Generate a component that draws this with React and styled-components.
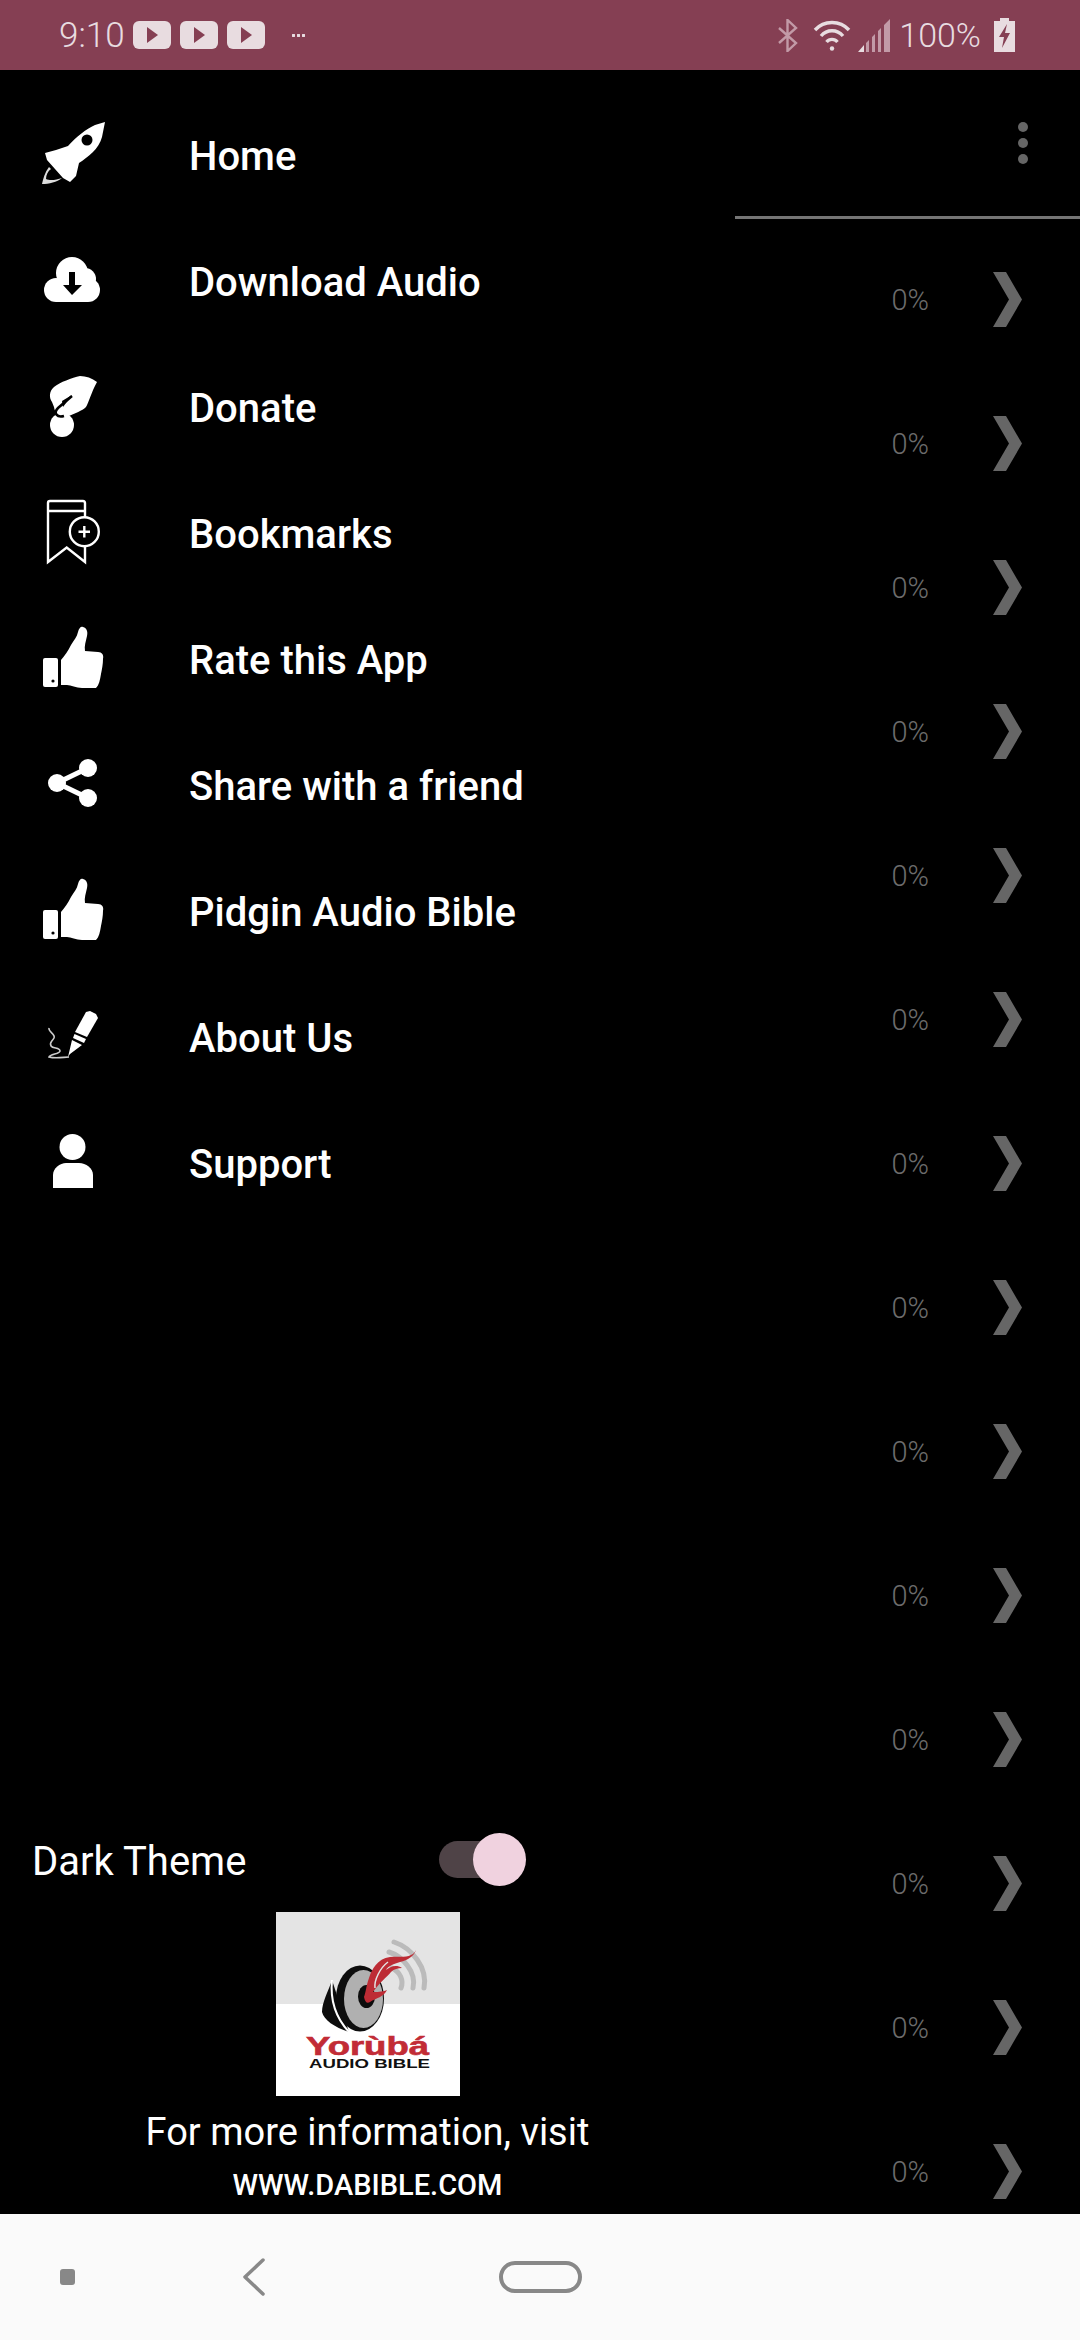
import React from 'react';
import styled, { createGlobalStyle } from 'styled-components';

const GlobalStyle = createGlobalStyle`
  html, body {
    margin: 0;
    padding: 0;
    background: #000;
  }
  * {
    box-sizing: border-box;
  }
`;

const Screen = styled.div`
  width: 1080px;
  height: 2340px;
  display: flex;
  flex-direction: column;
  background: #000;
  font-family: Roboto, "Liberation Sans", sans-serif;
  overflow: hidden;
`;

const StatusBar = styled.div`
  height: 70px;
  flex: none;
  background: #853f53;
  color: #e8dce0;
  display: flex;
  align-items: center;
  justify-content: space-between;
  padding: 0 65px 0 59px;
`;

const StatusGroup = styled.div`
  display: flex;
  align-items: center;
  gap: ${(props) => props.$gap || 0}px;
`;

const Clock = styled.span`
  font-size: 35px;
  font-weight: 300;
  width: 74px;
`;

const PlayBadge = styled.span`
  width: 38px;
  height: 28px;
  border-radius: 6px;
  background: #e8dce0;
  margin-right: 9px;
  display: flex;
  align-items: center;
  justify-content: center;

  &::after {
    content: '';
    border-left: 11px solid #853f53;
    border-top: 8px solid transparent;
    border-bottom: 8px solid transparent;
  }
`;

const MoreDots = styled.span`
  width: 14px;
  height: 3px;
  margin-left: 17px;
  background: radial-gradient(circle, #e8dce0 1.4px, transparent 1.6px) 0 0 / 5px 3px;
`;

const BatteryLevel = styled.span`
  font-size: 34px;
  font-weight: 300;
  margin: 0 13px 0 8px;
`;

const Main = styled.div`
  flex: 1;
  display: flex;
  min-height: 0;
`;

const Drawer = styled.div`
  width: 735px;
  flex: none;
  display: flex;
  flex-direction: column;
  justify-content: space-between;
`;

const Menu = styled.div`
  padding-top: 22px;
`;

const MenuRow = styled.div`
  height: 126px;
  display: flex;
  align-items: center;
  padding-left: 36px;
`;

const IconSlot = styled.div`
  width: 72px;
  height: 72px;
  margin-right: 81px;
  flex: none;
`;

const MenuLabel = styled.span`
  color: #fff;
  font-weight: 500;
  font-size: 40px;
  padding-top: 2px;
`;

const Footer = styled.div`
  display: flex;
  flex-direction: column;
  align-items: center;
  padding-bottom: 11px;
`;

const ThemeRow = styled.div`
  width: 100%;
  display: flex;
  align-items: center;
  justify-content: space-between;
  padding: 0 209px 0 32px;
  height: 54px;
`;

const ThemeLabel = styled.span`
  color: #fff;
  font-size: 40px;
`;

const SwitchTrack = styled.div`
  position: relative;
  width: 71px;
  height: 37px;
  margin-right: 16px;
  margin-top: -3px;
  border-radius: 19px;
  background: #4f4347;
`;

const SwitchThumb = styled.div`
  position: absolute;
  top: -8px;
  right: -16px;
  width: 53px;
  height: 53px;
  border-radius: 50%;
  background: #f0d2df;
`;

const LogoBox = styled.svg`
  display: block;
  width: 184px;
  height: 184px;
  margin-top: 24px;
`;

const InfoText = styled.div`
  color: #fff;
  font-size: 38px;
  line-height: 44px;
  margin-top: 14px;
`;

const SiteLink = styled.div`
  color: #fff;
  font-size: 29px;
  font-weight: 500;
  line-height: 36px;
  margin-top: 13px;
`;

const Behind = styled.div`
  flex: 1;
  min-width: 0;
  overflow: hidden;
`;

const Toolbar = styled.div`
  height: 149px;
  border-bottom: 3px solid #757575;
  display: flex;
  justify-content: flex-end;
  padding: 52px 52px 0 0;
`;

const Kebab = styled.div`
  display: flex;
  flex-direction: column;
  gap: 6px;
`;

const KebabDot = styled.span`
  width: 10px;
  height: 10px;
  border-radius: 50%;
  background: #666;
`;

const ProgressList = styled.div`
  padding-top: 8px;
`;

const ProgressRow = styled.div`
  height: 144px;
  display: flex;
  align-items: center;
  justify-content: flex-end;
  padding-right: 58px;
`;

const Percent = styled.span`
  color: #6c6c6c;
  font-size: 29px;
  font-weight: 300;
  margin-right: 64px;
  padding-top: 2px;
`;

const NavBar = styled.div`
  height: 126px;
  flex: none;
  background: #fafafa;
  display: flex;
  align-items: center;
  padding-left: 60px;
`;

const NavSquare = styled.span`
  width: 15px;
  height: 16px;
  border-radius: 3px;
  background: #888;
  margin-right: 167px;
`;

const NavPill = styled.span`
  width: 83px;
  height: 32px;
  border: 4px solid #888;
  border-radius: 16px;
  margin-left: 234px;
`;

const Rocket = () => (
  <svg width="72" height="72" viewBox="0 0 72 72">
    <path fill="#fff" d="M69 3L59 6C50 10 40 18 32 27L20 31L9 34L11 41L27 59L34 63L40 57L43 44C52 38 63 30 66 18Z" />
    <circle cx="51" cy="21" r="5.5" fill="#000" />
    <path fill="#ddd" d="M13 48C9 53 7 60 6 65C13 65 21 63 26 59C20 61 14 62 10 60C10 56 12 52 15 50Z" />
  </svg>
);

const CloudDown = () => (
  <svg width="72" height="72" viewBox="0 0 72 72">
    <g fill="#fff">
      <circle cx="20" cy="45" r="12" />
      <circle cx="36" cy="28" r="16" />
      <circle cx="49" cy="34" r="11" />
      <circle cx="52" cy="45" r="12" />
      <rect x="20" y="36" width="32" height="21" />
    </g>
    <path fill="#000" d="M33 27H39V40H46L36 50L27 40H33Z" />
  </svg>
);

const HandCoin = () => (
  <svg width="72" height="72" viewBox="0 0 72 72">
    <path fill="#fff" d="M61 11C56 7 50 5 44 5C36 7 24 11 18 16C13 20 13 27 16 31L18 36C19 44 27 48 33 45C39 42 46 40 50 36C53 31 55 22 61 11Z" />
    <circle cx="26" cy="54" r="12" fill="#fff" />
    <path fill="none" stroke="#000" strokeWidth="2.5" d="M36 25L22 37C17 42 21 47 28 45" />
    <path fill="#000" d="M26 30L36 24L27 36Z" />
  </svg>
);

const BookmarkPlus = () => (
  <svg width="72" height="72" viewBox="0 0 72 72" fill="none" stroke="#fff" strokeWidth="2.4">
    <path d="M49 20V6Q49 4 47 4H14Q12 4 12 6V65L30.7 50.5L49 65V49" />
    <path d="M12 14H49" />
    <circle cx="48.3" cy="34.7" r="14.5" />
    <path d="M42.5 34.7H54M48.3 29V40.5" />
  </svg>
);

const ThumbUp = () => (
  <svg width="72" height="72" viewBox="0 0 72 72">
    <rect x="7" y="35" width="15" height="29" rx="2" fill="#fff" />
    <circle cx="17" cy="58" r="1.6" fill="#000" />
    <path fill="#fff" d="M25 37C29 32 32 28 35 22C38 17 41 14 42 9C43 5 45 3 47 4C51 5 52 9 51 13C50 18 48 23 49 28L62 29C66 29 68 32 67 36C67 41 66 46 65 51C64 57 63 62 60 65L46 65C40 65 35 62 31 62H25Z" />
  </svg>
);

const ShareNodes = () => (
  <svg width="72" height="72" viewBox="0 0 72 72" fill="#fff">
    <path fill="none" stroke="#fff" strokeWidth="5" d="M52 19L21 34L52 49" />
    <circle cx="21" cy="34" r="9" />
    <circle cx="52" cy="19" r="9" />
    <circle cx="52" cy="49" r="9" />
  </svg>
);

const FountainPen = () => (
  <svg width="72" height="72" viewBox="0 0 72 72">
    <path fill="#fff" d="M54 10L60 13L62 17L51 36L39 31L50 11Z" />
    <path fill="#fff" d="M38.5 33L50 38L48 42L37 37Z" />
    <path fill="#fff" d="M36 39L46 44L34 53L32 56Z" />
    <path fill="none" stroke="#ccc" strokeWidth="1.6" d="M13 27C12 31 20 33 18 37C16 41 13 41 15 45C17 48 24 46 24 50C24 53 14 53 13 56C20 58 28 56 33 56" />
  </svg>
);

const Person = () => (
  <svg width="72" height="72" viewBox="0 0 72 72" fill="#fff">
    <circle cx="36.5" cy="20" r="13" />
    <path d="M17 61V48C17 41 24 36 30 36H43C50 36 57 41 57 48V61Z" />
  </svg>
);

const Chevron = () => (
  <svg width="29" height="55" viewBox="0 0 29 55">
    <path fill="#666" d="M0 0H13L29 27.5L13 55H0L16 27.5Z" />
  </svg>
);

const BluetoothIcon = () => (
  <svg width="20" height="33" viewBox="0 0 20 33" fill="none" stroke="#c29aa7" strokeWidth="2.4">
    <path d="M1 9L18 24L9.5 32V1L18 9L1 24" />
  </svg>
);

const WifiIcon = () => (
  <svg width="38" height="33" viewBox="0 0 38 33" fill="none" stroke="#e8dce0" strokeWidth="3.4">
    <path d="M2 11C11 1 27 1 36 11" />
    <path d="M8 17C14 10 24 10 30 17" />
    <path d="M13.5 23C16.5 19.5 21.5 19.5 24.5 23" />
    <circle cx="19" cy="29.5" r="2.2" fill="#e8dce0" stroke="none" />
  </svg>
);

const SignalIcon = () => (
  <svg width="33" height="33" viewBox="0 0 33 33">
    <path fill="#e8dce0" d="M0 33L6 26V33Z" />
    <path fill="#c29aa7" d="M8 24L11 21V33H8ZM14 18L17 15V33H14ZM20 12L23 9V33H20ZM26 6L32 0V33H26Z" />
  </svg>
);

const BatteryIcon = () => (
  <svg width="21" height="34" viewBox="0 0 21 34">
    <path fill="#e8dce0" d="M6 0H15V3H21V34H0V3H6Z" />
    <path fill="#853f53" d="M13 6L5 19H10L8 30L16 15H11Z" />
  </svg>
);

const Logo = () => (
  <LogoBox viewBox="0 0 184 184">
    <rect width="184" height="184" fill="#fff" />
    <rect width="184" height="92" fill="#e4e4e4" />
    <g fill="none" stroke="#bbb" strokeWidth="5" strokeLinecap="round">
      <path d="M118 30C136 36 152 56 148 76" />
      <path d="M113 40C126 44 141 60 137 76" />
      <path d="M116 56C124 60 128 68 125 76" />
    </g>
    <path fill="#0d0d0d" d="M56 68C52 80 46 90 46 100C48 108 58 115 73 120Z" />
    <path fill="none" stroke="#fff" strokeWidth="2" d="M56 68C54 88 60 106 73 120" />
    <ellipse cx="84" cy="86.5" rx="24" ry="33" fill="#0d0d0d" />
    <ellipse cx="87.5" cy="87" rx="19.5" ry="29" fill="#b0b0b0" />
    <ellipse cx="90.5" cy="84.5" rx="8.5" ry="11.5" fill="#0d0d0d" />
    <path fill="#bd2c35" d="M140 38C136 47 124 44 114 45C101 47 96 57 93 66C90 74 90 80 88 85C89 90 91 92 94 90C100 86 108 85 111 78C106 80 100 80 97 80C104 70 110 66 115 60C118 57 122 56 126 56C120 52 114 55 110 58C112 54 118 52 124 50C132 48 138 44 140 38Z" />
    <path fill="none" stroke="#e4e4e4" strokeWidth="1.5" d="M99 76C98 68 104 56 112 50" />
    <text x="30" y="143" fontFamily="Liberation Sans" fontWeight="700" fontSize="25" fill="#c22c36" stroke="#c22c36" strokeWidth="0.6" textLength="123" lengthAdjust="spacingAndGlyphs">Yorùbá</text>
    <text x="33" y="156" fontFamily="Liberation Sans" fontWeight="700" fontSize="12" fill="#111" textLength="121" lengthAdjust="spacingAndGlyphs">AUDIO BIBLE</text>
  </LogoBox>
);

const menuItems = [
  { label: 'Home', icon: <Rocket /> },
  { label: 'Download Audio', icon: <CloudDown /> },
  { label: 'Donate', icon: <HandCoin /> },
  { label: 'Bookmarks', icon: <BookmarkPlus /> },
  { label: 'Rate this App', icon: <ThumbUp /> },
  { label: 'Share with a friend', icon: <ShareNodes /> },
  { label: 'Pidgin Audio Bible', icon: <ThumbUp /> },
  { label: 'About Us', icon: <FountainPen /> },
  { label: 'Support', icon: <Person /> },
];

const App = () => (
  <Screen>
    <GlobalStyle />
    <StatusBar>
      <StatusGroup>
        <Clock>9:10</Clock>
        <PlayBadge />
        <PlayBadge />
        <PlayBadge />
        <MoreDots />
      </StatusGroup>
      <StatusGroup>
        <StatusGroup $gap={15}>
          <BluetoothIcon />
          <WifiIcon />
        </StatusGroup>
        <StatusGroup $gap={7}>
          <span />
          <SignalIcon />
        </StatusGroup>
        <BatteryLevel>100%</BatteryLevel>
        <BatteryIcon />
      </StatusGroup>
    </StatusBar>
    <Main>
      <Drawer>
        <Menu>
          {menuItems.map((item) => (
            <MenuRow key={item.label}>
              <IconSlot>{item.icon}</IconSlot>
              <MenuLabel>{item.label}</MenuLabel>
            </MenuRow>
          ))}
        </Menu>
        <Footer>
          <ThemeRow>
            <ThemeLabel>Dark Theme</ThemeLabel>
            <SwitchTrack>
              <SwitchThumb />
            </SwitchTrack>
          </ThemeRow>
          <Logo />
          <InfoText>For more information, visit</InfoText>
          <SiteLink>WWW.DABIBLE.COM</SiteLink>
        </Footer>
      </Drawer>
      <Behind>
        <Toolbar>
          <Kebab>
            <KebabDot />
            <KebabDot />
            <KebabDot />
          </Kebab>
        </Toolbar>
        <ProgressList>
          {Array.from({ length: 14 }, (_, i) => (
            <ProgressRow key={i}>
              <Percent>0%</Percent>
              <Chevron />
            </ProgressRow>
          ))}
        </ProgressList>
      </Behind>
    </Main>
    <NavBar>
      <NavSquare />
      <svg width="23" height="38" viewBox="0 0 23 38" fill="none" stroke="#888" strokeWidth="3.5" strokeLinecap="round" strokeLinejoin="round">
        <path d="M21 2L3 19L21 36" />
      </svg>
      <NavPill />
    </NavBar>
  </Screen>
);

export default App;
